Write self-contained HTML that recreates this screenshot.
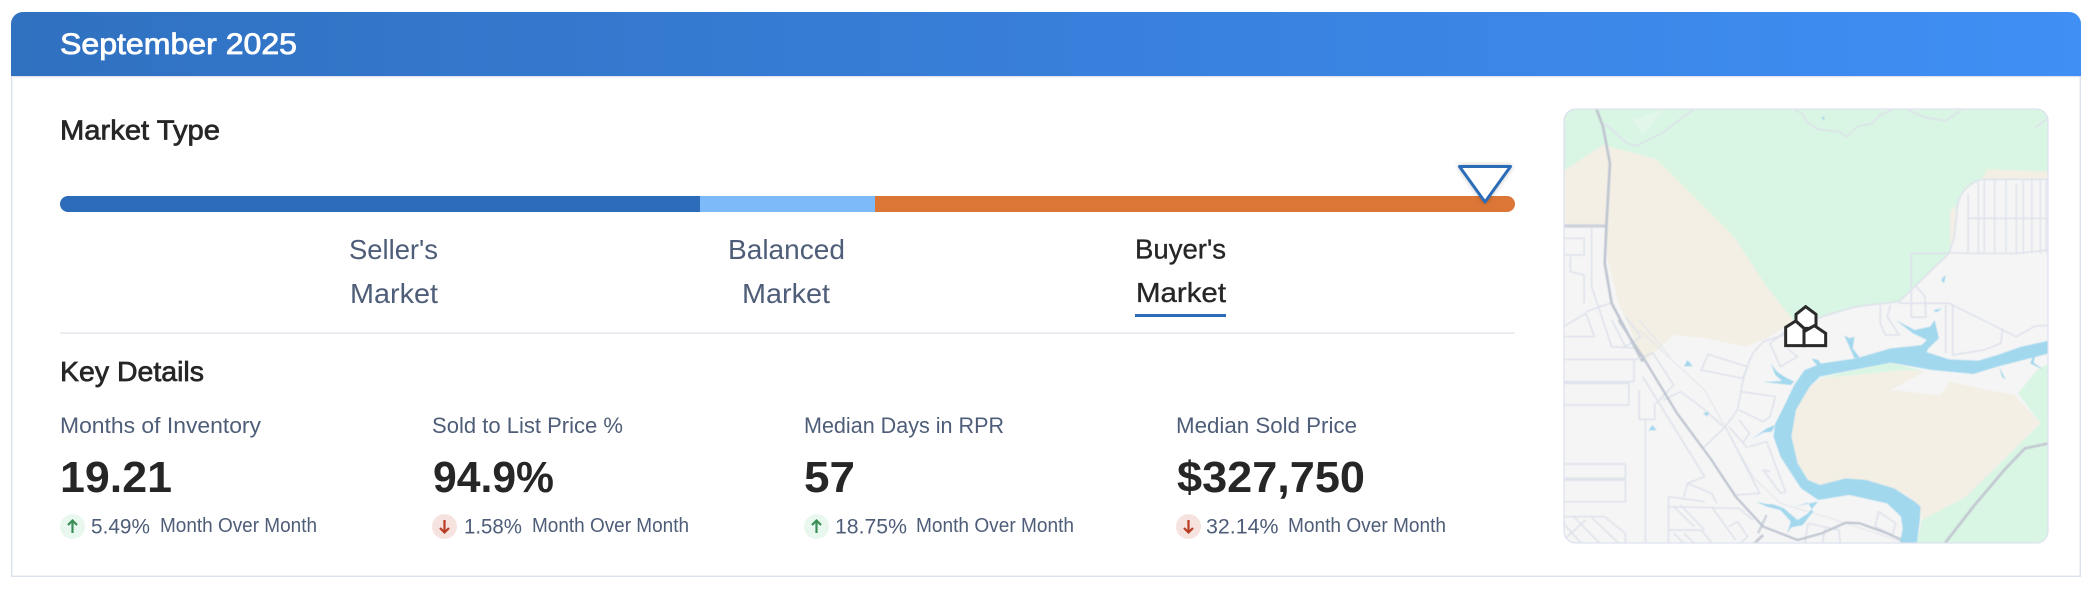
<!DOCTYPE html>
<html lang="en"><head><meta charset="utf-8"><title>September 2025</title>
<style>
html,body{margin:0;padding:0;background:#fff;width:2100px;height:592px;overflow:hidden}
svg{display:block}
text{font-family:"Liberation Sans",Arial,sans-serif}
.h{font-weight:700;fill:#262626}
.m{font-weight:400;fill:#262626;stroke:#262626;stroke-width:.7}
.g{fill:#4e5d78}
</style></head><body>
<svg width="2100" height="592" viewBox="0 0 2100 592" xmlns="http://www.w3.org/2000/svg">
<defs>
<linearGradient id="hd" x1="0" y1="0" x2="1" y2="0"><stop offset="0" stop-color="#3071c0"/><stop offset=".5" stop-color="#387fda"/><stop offset="1" stop-color="#3f8ff5"/></linearGradient>
<clipPath id="mc"><rect x="1564" y="109" width="484" height="434" rx="12"/></clipPath>
<filter id="bl" x="-2%" y="-2%" width="104%" height="104%"><feGaussianBlur stdDeviation=".6"/></filter>
<filter id="sh" x="-30%" y="-30%" width="160%" height="160%"><feDropShadow dx="0" dy="0" stdDeviation="2.5" flood-color="#000" flood-opacity=".25"/></filter>
</defs>

<path d="M11.7 20V576.3H2080.3V20" fill="#fff" stroke="#dde2ef" stroke-width="1.4"/>
<path d="M11 76V24a12 12 0 0 1 12-12H2069a12 12 0 0 1 12 12V76Z" fill="url(#hd)"/>
<rect x="11" y="76" width="2070" height="1.2" fill="#dde2ef"/>
<text x="60" y="54" font-size="30" fill="#fff" stroke="#fff" stroke-width=".8" textLength="237" lengthAdjust="spacingAndGlyphs">September 2025</text>

<text class="m" x="60" y="139.5" font-size="28" textLength="160" lengthAdjust="spacingAndGlyphs">Market Type</text>

<path d="M68 196H700V212H68a8 8 0 0 1 0-16Z" fill="#2d6cb9"/>
<rect x="700" y="196" width="175" height="16" fill="#7cbafa"/>
<path d="M875 196H1507a8 8 0 0 1 0 16H875Z" fill="#dc7636"/>
<polygon points="1459.5,166.5 1510.5,166.5 1485,202" fill="#fff" stroke="#2b6cb8" stroke-width="3" stroke-linejoin="round" filter="url(#sh)"/>

<text class="g" x="349" y="259" font-size="28" textLength="89" lengthAdjust="spacingAndGlyphs">Seller's</text>
<text class="g" x="350" y="303" font-size="28" textLength="88" lengthAdjust="spacingAndGlyphs">Market</text>
<text class="g" x="728" y="259" font-size="28" textLength="117" lengthAdjust="spacingAndGlyphs">Balanced</text>
<text class="g" x="742" y="303" font-size="28" textLength="88" lengthAdjust="spacingAndGlyphs">Market</text>
<text x="1135" y="258.5" font-size="28" fill="#262626" stroke="#262626" stroke-width=".35" textLength="91" lengthAdjust="spacingAndGlyphs">Buyer's</text>
<text x="1136" y="302" font-size="28" fill="#262626" stroke="#262626" stroke-width=".35" textLength="90" lengthAdjust="spacingAndGlyphs">Market</text>
<rect x="1135" y="314" width="91" height="3" fill="#2b6cb8"/>
<rect x="60" y="332.5" width="1455" height="1.3" fill="#e2e5ee"/>

<text class="m" x="60" y="381" font-size="28" textLength="144" lengthAdjust="spacingAndGlyphs">Key Details</text>

<text class="g" x="60" y="433" font-size="22.5" textLength="201" lengthAdjust="spacingAndGlyphs">Months of Inventory</text>
<text class="g" x="432" y="433" font-size="22.5" textLength="191" lengthAdjust="spacingAndGlyphs">Sold to List Price %</text>
<text class="g" x="804" y="433" font-size="22.5" textLength="200" lengthAdjust="spacingAndGlyphs">Median Days in RPR</text>
<text class="g" x="1176" y="433" font-size="22.5" textLength="181" lengthAdjust="spacingAndGlyphs">Median Sold Price</text>

<text class="h" x="60" y="492" font-size="44" textLength="112" lengthAdjust="spacingAndGlyphs">19.21</text>
<text class="h" x="433" y="492" font-size="44" textLength="121" lengthAdjust="spacingAndGlyphs">94.9%</text>
<text class="h" x="804" y="492" font-size="44" textLength="51" lengthAdjust="spacingAndGlyphs">57</text>
<text class="h" x="1177" y="492" font-size="44" textLength="188" lengthAdjust="spacingAndGlyphs">$327,750</text>

<circle cx="72.5" cy="526.5" r="12.5" fill="#e8f8ef"/>
<path d="M72.5 533V520.5M68 525l4.5-4.5 4.5 4.5" fill="none" stroke="#3a8f56" stroke-width="2.2"/>
<text class="g" x="91" y="533.5" font-size="21" textLength="59" lengthAdjust="spacingAndGlyphs">5.49%</text>
<text class="g" x="160" y="532" font-size="20" textLength="157" lengthAdjust="spacingAndGlyphs">Month Over Month</text>

<circle cx="444.5" cy="526.5" r="12.5" fill="#f6e3df"/>
<path d="M444.5 520V532.5M440 528l4.5 4.5 4.5-4.5" fill="none" stroke="#b93c24" stroke-width="2.2"/>
<text class="g" x="464" y="533.5" font-size="21" textLength="58" lengthAdjust="spacingAndGlyphs">1.58%</text>
<text class="g" x="532" y="532" font-size="20" textLength="157" lengthAdjust="spacingAndGlyphs">Month Over Month</text>

<circle cx="816.5" cy="526.5" r="12.5" fill="#e8f8ef"/>
<path d="M816.5 533V520.5M812 525l4.5-4.5 4.5 4.5" fill="none" stroke="#3a8f56" stroke-width="2.2"/>
<text class="g" x="835" y="533.5" font-size="21" textLength="72" lengthAdjust="spacingAndGlyphs">18.75%</text>
<text class="g" x="916" y="532" font-size="20" textLength="158" lengthAdjust="spacingAndGlyphs">Month Over Month</text>

<circle cx="1188.5" cy="526.5" r="12.5" fill="#f6e3df"/>
<path d="M1188.5 520V532.5M1184 528l4.5 4.5 4.5-4.5" fill="none" stroke="#b93c24" stroke-width="2.2"/>
<text class="g" x="1206" y="533.5" font-size="21" textLength="72.5" lengthAdjust="spacingAndGlyphs">32.14%</text>
<text class="g" x="1288" y="532" font-size="20" textLength="158" lengthAdjust="spacingAndGlyphs">Month Over Month</text>

<g clip-path="url(#mc)">
<g filter="url(#bl)">
<rect x="1564" y="109" width="484" height="434" fill="#f5f5f5"/>
<!-- upper part -->
<g transform="translate(1560,90) scale(.3444,.3333)">
<path d="M0,58H1420V268H1225Q1170,285 1155,340L1145,440L1130,490L1020,600L985,635L860,650L760,680L680,695L600,590L505,440L280,208L125,165L0,250Z" fill="#d9f5e3"/>
<path d="M0,250L125,165L280,208L505,440L600,590L680,695L600,745L540,770L420,745L330,735L250,810L235,790L170,640L140,520L135,410L0,410Z" fill="#f3efe5"/>
<path d="M1240,238L1420,245V268L1225,268ZM1133,365L1150,345L1148,420L1133,470Z" fill="#f3efe5"/>
<path d="M210,90L300,60L240,135Z" fill="#e2f6ea"/>
<g fill="none" stroke="#dde1eb" stroke-width="4.5" stroke-linejoin="round">
<path d="M130,100L195,160L220,168L295,130L385,60"/>
<path d="M680,60L705,70L715,95L750,118L810,125L832,140L865,108L905,102L930,75L965,60"/>
<path d="M1010,60L1060,82L1120,92L1165,62M1380,112L1417,85"/>
<path d="M1420,268H1225Q1170,285 1155,340L1145,440L1130,490L1020,600L985,635L860,650L760,680L650,735L590,755L560,790L550,815"/>
<path d="M1020,490H1130M1020,490V682H1062L1060,620L1035,590"/>
<path d="M1130,488L1185,490H1330L1420,480M1185,385H1420"/>
<path d="M1185,310V490M1215,275V490M1232,270V490M1262,270V490M1295,270V490M1325,280V490M1345,270V490M1370,270V490M1395,270V490M1412,270V490" stroke-width="4"/>
<path d="M985,640L1130,640L1325,740L1380,708L1420,706"/>
<path d="M1120,645V790M1140,645V795L1230,780L1280,760L1285,715"/>
<path d="M930,645V700L945,735L985,735L950,680L960,645"/>
<path d="M92,415V590L150,770L215,775M10,445H70V495H10M30,500V545L70,555V640"/>
<path d="M10,740H100L75,670L10,710M75,665L145,640M190,680L235,740L190,770L150,690"/>
<path d="M230,690L320,800" stroke-width="2.5"/>
</g>
<path d="M0,408H135" stroke="#ccd1dc" stroke-width="10" fill="none"/>
<path d="M105,55L125,110L145,220L135,400L130,520L150,640L240,815" stroke="#c0c6d1" stroke-width="8" fill="none"/>
<path d="M760,80l10,3-6,8ZM1115,558l-8,12 8,10 5-22ZM1085,660l26-5-20,13Z" fill="#a2d8ee"/>
</g>
<!-- lower part -->
<g transform="translate(1560,320) scale(.3444,.3333)">
<path d="M750,175L960,128L1060,155L1000,150Z" fill="#d9f5e3"/>
<path d="M725,200L760,175L1000,150L1060,155L960,210L1105,225L1130,185L1220,205L1320,225L1395,310L1330,390L1240,500L1180,530L1050,600L1045,560L1000,520L890,490L760,495L720,480L690,430L672,350L685,270Z" fill="#f3efe5"/>
<path d="M1420,130L1385,150L1330,220L1395,310L1180,530L1050,600L1035,680H1420Z" fill="#d9f5e3"/>
<g fill="none" stroke="#dde1eb" stroke-width="4.5" stroke-linejoin="round">
<path d="M10,118H215V185H10M10,190H200V255H10M215,120L270,100L330,195L280,250M230,210V298H275V250M248,298V680"/>
<path d="M10,432H190V475H10M10,480H190V545H10"/>
<path d="M410,150L430,103L545,140L530,175ZM555,110Q530,170 525,220L515,270L480,320L415,385M525,215L625,230L610,290L590,305L520,270"/>
<path d="M240,170L420,470L370,490L360,530M300,240L350,215L415,265L475,320"/>
<path d="M480,320L580,520L510,525L440,420M550,380L600,365L655,515L640,520L590,450L610,455M490,320L545,385M520,300L550,340L530,370"/>
<path d="M315,680V530L420,545M315,560L520,565L560,600M315,630H410L450,680M370,490L440,520L455,550"/>
<path d="M330,560L390,620M350,555L420,630M330,640L370,680M360,640L400,680M440,560L510,660M490,620L515,605L545,650L510,680"/>
<path d="M10,590H130L190,640V680M10,610L70,680M40,590L125,680M90,590L180,680M10,660L75,600"/>
<path d="M720,610L810,630L815,680M720,610L710,680M925,575L975,610L965,645L915,620ZM770,625L760,680"/>
<path d="M660,30L610,70L640,140L690,110L660,85"/>
<path d="M230,30L420,210L490,340L560,470L640,550L770,590L1000,668" stroke-width="2.5"/>
<path d="M600,585L575,640" stroke-width="7" stroke="#ccd1dc"/>
</g>
<path d="M170,0L240,110L340,280L440,420L510,530L590,620L690,660L760,640L830,608L870,610L950,640L1010,668" fill="none" stroke="#c0c6d1" stroke-width="7"/>
<path d="M1420,370L1350,385L1290,450L1200,560L1110,680" fill="none" stroke="#c2c8d2" stroke-width="8"/>
<path d="M590,645L555,680" fill="none" stroke="#c2c8d2" stroke-width="8"/>
<g fill="#a2d8ee">
<path d="M1420,62L1340,80L1270,105L1215,122L1130,118L1060,95L1055,75L960,85L860,115L760,130L710,150L680,195L650,260L625,310L620,350L640,410L665,450L700,505L750,540L840,525L950,550L990,590L995,625L985,680L1035,680L1045,600L1047,560L1030,545L970,505L890,480L830,475L755,495L720,480L690,430L672,350L685,270L725,200L755,170L960,128L1080,150L1200,162L1270,140L1420,100Z"/>
<path d="M590,186L645,183L625,165L612,130L630,155L655,172L680,185L670,195Z"/>
<path d="M975,0L1030,30L1075,20L1088,0L1100,55L1070,85L1062,100L1050,75L1065,60L1025,40Z"/>
<path d="M825,45L840,55L855,50L850,85L870,112L855,115L842,85Z"/>
<path d="M730,115L750,120L760,135L745,135Z"/>
<path d="M1375,105L1365,130L1400,148L1395,142L1375,128L1382,100Z"/>
<path d="M1275,140L1295,180L1283,170Z"/>
<path d="M625,315L600,325L555,358L590,338L615,335Z"/>
<path d="M570,545L600,552L620,553L650,565L690,600L720,580L750,545L680,560L720,548L735,575L705,615L672,622L660,640L670,605L640,570L600,560Z"/>
<path d="M370,120L360,140L385,138ZM268,315L257,332L281,330ZM415,280L432,275L428,290Z"/>
</g>
</g>
</g>
</g>
<rect x="1564" y="109" width="484" height="434" rx="12" fill="none" stroke="#dde2ef" stroke-width="1.3"/>
<!-- house cluster marker -->
<g transform="translate(1780,295) scale(.3333)" fill="#fff" stroke="#2a2a2a" stroke-width="9" stroke-linejoin="miter">
<path d="M48,78V58L77,35L108,58V92L88,100H72Z"/>
<path d="M17,152V97L47,78L72,100V152Z"/>
<path d="M72,152V110L103,92L137,115V152Z"/>
</g>
</svg>
</body></html>
